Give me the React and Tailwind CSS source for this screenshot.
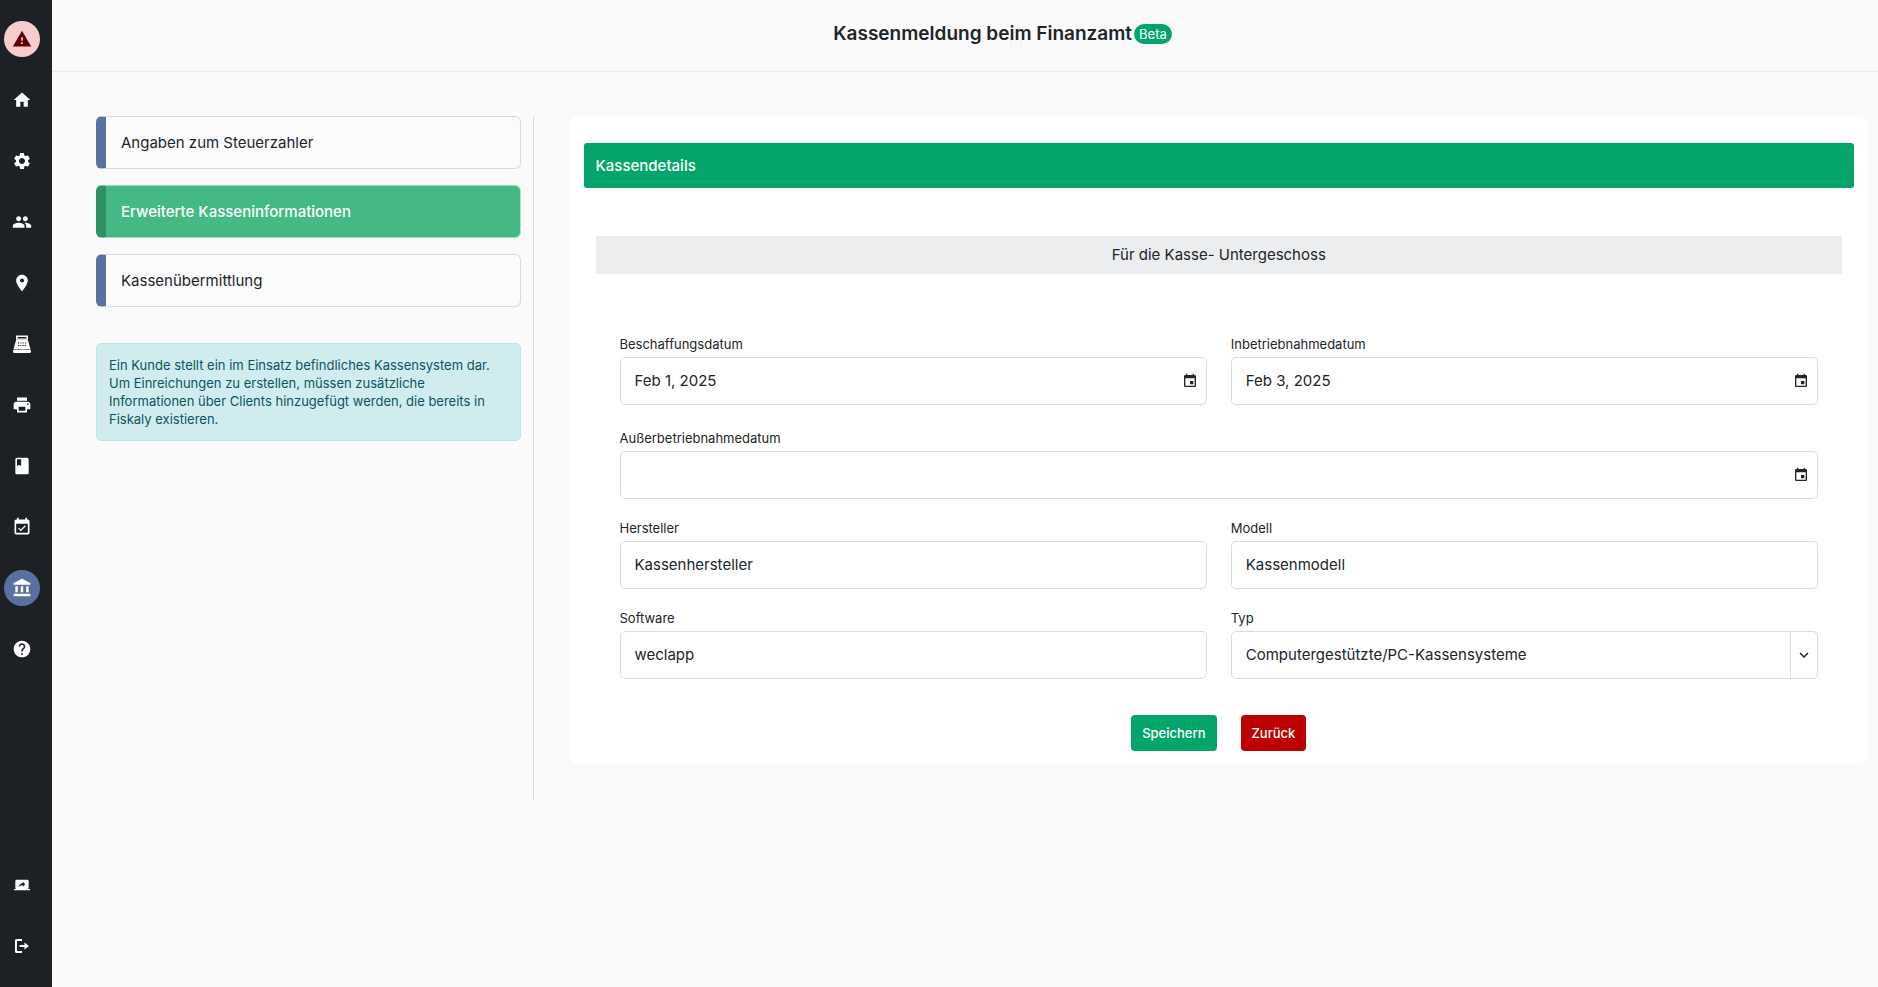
import React, { useState } from 'react';
import {
  MdAccountBalance,
  MdBook,
  MdEvent,
  MdEventAvailable,
  MdHelp,
  MdHome,
  MdKeyboardArrowDown,
  MdLocationOn,
  MdPeople,
  MdPrint,
  MdScreenShare,
  MdSettings,
  MdWarning,
} from 'react-icons/md';

const RegisterIcon = ({ size }) => (
  <svg width={size} height={size} viewBox="0 0 20 20" fill="currentColor" aria-hidden="true">
    <path fillRule="evenodd" d="M4 1.5h12v4.3H4zM5.6 2.9v1.5h8.8V2.9z" />
    <path fillRule="evenodd" d="M4.2 5.8h11.6L18.6 15.4H1.4zM6 8.6v1h1.200v-1zM8.300 8.600v1h1.200v-1zM10.600 8.600v1h1.200v-1zM12.900 8.600v1h1.200v-1zM6 11v1h1.200v-1zM8.300 11v1h1.200v-1zM10.600 11v1h1.200v-1zM12.900 11v1h1.200v-1z" />
    <path d="M1.200 15.900h17.600v2a1 1 0 0 1-1 1H2.200a1 1 0 0 1-1-1z" />
  </svg>
);

const LogoutIcon = ({ size }) => (
  <svg width={size} height={size} viewBox="0 0 16 16" fill="currentColor" aria-hidden="true">
    <path d="M2.5 1H8v2H3v10h5v2H2.5A1.5 1.5 0 0 1 1 13.5v-11A1.5 1.5 0 0 1 2.5 1z" />
    <path d="M5.5 7h5V4.5L15 8l-4.5 3.500V9h-5z" />
  </svg>
);

const NAV_ITEMS = [
  { id: 'warnings', label: 'Warnungen', icon: MdWarning, tone: 'bg-[#f6cccf] text-[#5c0000]' },
  { id: 'home', label: 'Startseite', icon: MdHome },
  { id: 'settings', label: 'Einstellungen', icon: MdSettings },
  { id: 'users', label: 'Benutzer', icon: MdPeople },
  { id: 'locations', label: 'Standorte', icon: MdLocationOn },
  { id: 'registers', label: 'Kassen', icon: RegisterIcon },
  { id: 'printers', label: 'Drucker', icon: MdPrint },
  { id: 'journal', label: 'Kassenbuch', icon: MdBook },
  { id: 'closings', label: 'Abschlüsse', icon: MdEventAvailable },
  { id: 'tax', label: 'Finanzamt', icon: MdAccountBalance, tone: 'bg-[#5a70a0] text-white' },
  { id: 'help', label: 'Hilfe', icon: MdHelp },
];

const FOOTER_ITEMS = [
  { id: 'share', label: 'Bildschirm teilen', icon: MdScreenShare, size: 16 },
  { id: 'logout', label: 'Abmelden', icon: LogoutIcon, size: 16 },
];

const STEPS = ['Angaben zum Steuerzahler', 'Erweiterte Kasseninformationen', 'Kassenübermittlung'];

const NavLink = ({ item }) => {
  const Icon = item.icon;
  return (
    <a
      href={`#${item.id}`}
      aria-label={item.label}
      className={`flex h-9 w-9 items-center justify-center rounded-full ${item.tone || 'text-white'}`}
    >
      <Icon size={item.size || 20} />
    </a>
  );
};

const Sidebar = () => (
  <nav className="flex w-[52px] shrink-0 flex-col justify-between bg-[#1d2125] pt-[21px] pb-[23px] pl-1">
    <div className="flex flex-col gap-[25px]">
      {NAV_ITEMS.map((item) => <NavLink key={item.id} item={item} />)}
    </div>
    <div className="flex flex-col gap-[25px]">
      {FOOTER_ITEMS.map((item) => <NavLink key={item.id} item={item} />)}
    </div>
  </nav>
);

const StepButton = ({ label, active, onClick }) => (
  <button
    type="button"
    onClick={onClick}
    className={`h-[53px] w-full rounded-md border border-l-10 pl-[15px] text-left text-[15px] leading-6 ${
      active
        ? 'border-[#a9dfca] border-l-[#2f9166] bg-[#44b983] font-medium text-white'
        : 'border-[#d5d9ee] border-l-[#5a70a0] bg-[#fbfbfc] text-[#212529]'
    }`}
  >
    {label}
  </button>
);

// Beschriftung + Rahmen, das Eingabefeld kommt als children
const Field = ({ id, label, children }) => (
  <div>
    <label htmlFor={id} className="mb-[3px] block text-[13px] leading-5">{label}</label>
    <div className="flex h-12 rounded-[5px] border border-[#d9dbde] bg-white">{children}</div>
  </div>
);

const TextField = ({ id, label, defaultValue }) => (
  <Field id={id} label={label}>
    <input id={id} type="text" defaultValue={defaultValue} className="min-w-0 flex-1 rounded-[5px] px-3.5 text-[15px] leading-6 outline-none" />
  </Field>
);

const DateField = ({ id, label, defaultValue }) => (
  <Field id={id} label={label}>
    <input id={id} type="text" defaultValue={defaultValue} className="min-w-0 flex-1 rounded-[5px] px-3.5 text-[15px] leading-6 outline-none" />
    <button type="button" aria-label={`${label} wählen`} className="flex w-8 items-center justify-center">
      <MdEvent size={16} />
    </button>
  </Field>
);

const App = () => {
  const [step, setStep] = useState(1);

  return (
    <div className="flex min-h-screen bg-[#fafafa] font-['Inter','Liberation_Sans',sans-serif] text-[#212529]">
      <Sidebar />

      <div className="min-w-0 flex-1">
        {/* Kopfzeile */}
        <header className="flex h-[72px] items-start justify-center border-b border-[#ebebeb] pt-5 pl-[75px]">
          <div className="flex items-center gap-[2px]">
            <h1 className="text-[19px] leading-7 font-semibold">Kassenmeldung beim Finanzamt</h1>
            <span className="rounded-full bg-[#04a56a] px-[5px] text-[13px] leading-5 text-white">Beta</span>
          </div>
        </header>

        <div className="flex items-start pt-11 pl-8">
          {/* Schritte */}
          <aside className="min-h-[684px] w-[calc(25%+1px)] shrink-0 border-r border-[#d9dadd] px-3">
            <div className="flex flex-col gap-4">
              {STEPS.map((label, i) => (
                <StepButton key={label} label={label} active={i === step} onClick={() => setStep(i)} />
              ))}
            </div>
            <p className="mt-9 rounded-[5px] border border-[#bfe5e3] bg-[#d1ecef] px-3 py-3 text-[13px] leading-[18px] text-[#0c5460]">
              Ein Kunde stellt ein im Einsatz befindliches Kassensystem dar. Um Einreichungen zu
              erstellen, müssen zusätzliche Informationen über Clients hinzugefügt werden, die
              bereits in Fiskaly existieren.
            </p>
          </aside>

          {/* Formular */}
          <main className="min-w-0 flex-1 pr-2.5 pl-9">
            <form className="rounded-lg bg-white px-3.5 pt-[27px] pb-[13px]" onSubmit={(e) => e.preventDefault()}>
              <h2 className="flex h-[45px] items-center rounded-[3px] bg-[#04a56a] px-3 text-[15px] leading-6 font-medium text-white">
                Kassendetails
              </h2>

              <div className="px-3 pt-12">
                <h3 className="flex h-[38px] items-center justify-center bg-[#ecedef] text-[15px] leading-6">
                  Für die Kasse- Untergeschoss
                </h3>

                <div className="flex flex-col gap-[19px] px-6 pt-[60px]">
                  <div className="grid grid-cols-2 gap-6 pb-1">
                    <DateField id="acquired" label="Beschaffungsdatum" defaultValue="Feb 1, 2025" />
                    <DateField id="commissioned" label="Inbetriebnahmedatum" defaultValue="Feb 3, 2025" />
                  </div>
                  <DateField id="decommissioned" label="Außerbetriebnahmedatum" defaultValue="" />
                  <div className="grid grid-cols-2 gap-6">
                    <TextField id="manufacturer" label="Hersteller" defaultValue="Kassenhersteller" />
                    <TextField id="model" label="Modell" defaultValue="Kassenmodell" />
                  </div>
                  <div className="grid grid-cols-2 gap-6">
                    <TextField id="software" label="Software" defaultValue="weclapp" />
                    <Field id="type" label="Typ">
                      <div className="relative flex flex-1">
                        <select id="type" className="w-full appearance-none rounded-[5px] bg-transparent pr-8 pl-3.5 text-[15px] leading-6 outline-none">
                          <option>Computergestützte/PC-Kassensysteme</option>
                        </select>
                        <span className="pointer-events-none absolute inset-y-0 right-0 flex w-[27px] items-center justify-center border-l border-[#d9dbde]">
                          <MdKeyboardArrowDown size={18} />
                        </span>
                      </div>
                    </Field>
                  </div>
                </div>
              </div>

              <div className="flex justify-center gap-6 pt-9">
                <button type="submit" className="h-9 rounded-sm bg-[#04a56a] px-[11px] text-[13px] leading-5 font-medium text-white">Speichern</button>
                <button type="button" className="h-9 rounded-sm bg-[#bd0000] px-[11px] text-[13px] leading-5 font-medium text-white">Zurück</button>
              </div>
            </form>
          </main>
        </div>
      </div>
    </div>
  );
};

export default App;
